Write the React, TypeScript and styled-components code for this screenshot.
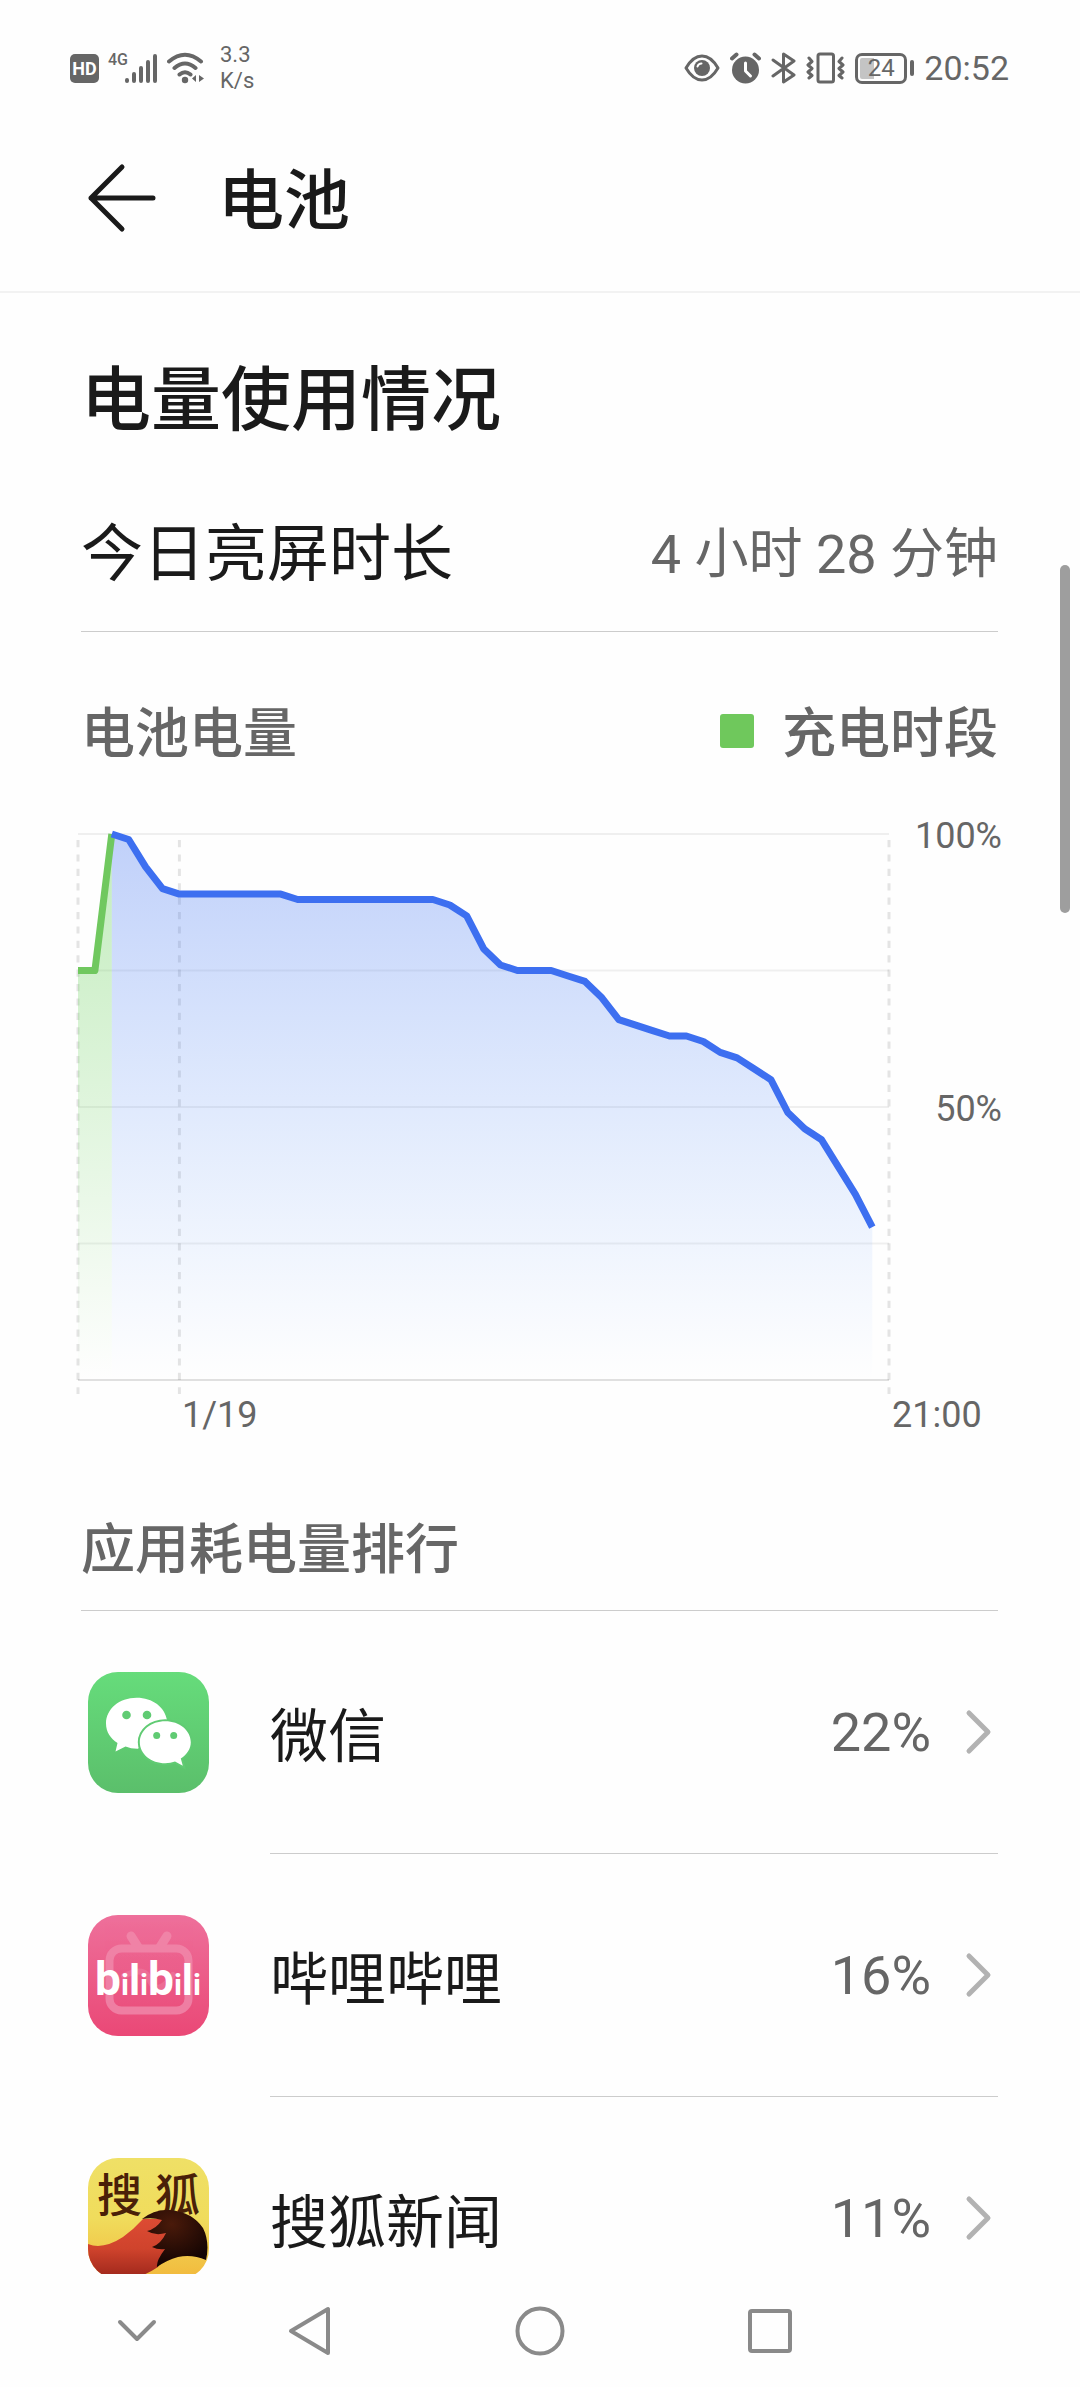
import React from 'react';
import styled, { createGlobalStyle } from 'styled-components';

const GlobalStyle = createGlobalStyle`
  * {
    box-sizing: border-box;
  }

  body {
    margin: 0;
    background: #fefefe;
    color: #1a1a1a;
    font-family: Roboto, "Noto Sans CJK SC", sans-serif;
  }

  button {
    margin: 0;
    padding: 0;
    border: none;
    background: none;
    color: inherit;
    font: inherit;
    text-align: left;
    cursor: pointer;
  }

  svg {
    display: block;
  }
`;

const Screen = styled.div`
  position: relative;
  display: flex;
  flex-direction: column;
  height: 100vh;
  overflow: hidden;
`;

/* ---------- status bar ---------- */

const StatusBar = styled.div`
  display: flex;
  align-items: center;
  justify-content: space-between;
  flex: none;
  height: 104px;
  padding: 32px 71px 0 70px;
  color: #666;
`;

const StatusGroup = styled.div<{ $gap: number }>`
  display: flex;
  align-items: center;
  gap: ${({ $gap }) => $gap}px;
`;

const HdBadge = styled.span`
  width: 29px;
  height: 29px;
  border-radius: 5px;
  background: #666;
  color: #fff;
  font-size: 18px;
  font-weight: 700;
  line-height: 29px;
  text-align: center;
`;

const Network = styled.span`
  display: flex;
  align-items: flex-start;
  font-size: 16px;
  font-weight: 500;
  line-height: 16px;

  svg {
    margin-left: -4px;
  }
`;

const NetSpeed = styled.span`
  margin-left: 6px;
  font-size: 22px;
  line-height: 26px;
`;

const BatteryBox = styled.span`
  display: flex;
  align-items: center;
  gap: 3px;

  &::after {
    content: '';
    width: 4px;
    height: 16px;
    border-radius: 2px;
    background: #666;
  }
`;

const BatteryLevel = styled.span`
  width: 52px;
  height: 31px;
  border: 3px solid #666;
  border-radius: 7px;
  background: linear-gradient(90deg, #c4c4c4 14px, transparent 14px) content-box;
  padding: 2px;
  font-size: 24px;
  line-height: 21px;
  text-align: center;
`;

const Clock = styled.span`
  font-size: 34px;
  line-height: 36px;
`;

/* ---------- page header ---------- */

const Header = styled.header`
  display: flex;
  align-items: center;
  flex: none;
  gap: 62px;
  height: 189px;
  padding: 0 87px;
  border-bottom: 2px solid #f2f2f2;
`;

const Title = styled.h1`
  margin: 0;
  padding-top: 8px;
  font-size: 66px;
  font-weight: 500;
  line-height: 80px;
`;

/* ---------- content ---------- */

const Content = styled.main`
  flex: 1;
  min-height: 0;
  padding: 68px 82px 0 81px;
  overflow: hidden;
`;

const SectionTitle = styled.h2`
  margin: 0 0 36px;
  font-size: 70px;
  font-weight: 500;
  line-height: 80px;
`;

const ScreenTime = styled.div`
  display: flex;
  align-items: center;
  justify-content: space-between;
  height: 155px;
  padding-bottom: 10px;
  border-bottom: 1px solid #ccc;
  font-size: 62px;
`;

const Value = styled.span`
  color: #666;
  font-size: 54px;
`;

const ChartHead = styled.div`
  display: flex;
  align-items: center;
  justify-content: space-between;
  margin: 71px 0 49px;
  color: #666;
  font-size: 54px;
  font-weight: 500;
  line-height: 64px;
`;

const Legend = styled.span`
  display: flex;
  align-items: center;
  gap: 28px;

  &::before {
    content: '';
    width: 34px;
    height: 34px;
    margin-bottom: 8px;
    border-radius: 3px;
    background: #6fc85c;
  }
`;

const ChartBox = styled.div`
  margin: 0 -4px;

  svg {
    width: 100%;
    height: auto;
    overflow: visible;
  }

  text {
    fill: #666;
    font-size: 36px;
  }
`;

const ListTitle = styled.h3`
  margin: 79px 0 0;
  padding-bottom: 27px;
  border-bottom: 1px solid #ccc;
  color: #666;
  font-size: 54px;
  font-weight: 500;
  line-height: 64px;
`;

const AppList = styled.ul`
  margin: 0;
  padding: 0;
  list-style: none;
`;

const AppRow = styled.button`
  display: flex;
  align-items: center;
  width: 100%;
  height: 243px;
  padding-left: 7px;
`;

const AppIcon = styled.span`
  flex: none;
  width: 121px;
  height: 121px;
  border-radius: 30px;
  overflow: hidden;
`;

const AppInfo = styled.span`
  display: flex;
  align-items: center;
  flex: 1;
  gap: 32px;
  height: 100%;
  margin-left: 61px;
  padding-right: 5px;
  border-bottom: 1px solid #ccc;
`;

const AppName = styled.span`
  flex: 1;
  font-size: 58px;
`;

const ScrollThumb = styled.div`
  position: absolute;
  top: 565px;
  right: 10px;
  width: 10px;
  height: 348px;
  border-radius: 5px;
  background: #9e9e9e;
`;

const NavBar = styled.nav`
  display: grid;
  flex: none;
  grid-template-columns: 78fr 117fr 230fr 230fr 230fr 195fr;
  height: 113px;
`;

const NavButton = styled.button`
  display: flex;
  align-items: center;
  justify-content: center;

  &:first-child {
    grid-column-start: 2;
  }
`;

/* ---------- status icons ---------- */

const SignalIcon = () => (
  <svg width="34" height="32" viewBox="0 0 34 32" fill="none" stroke="#666" strokeWidth="4" strokeLinecap="round">
    <path d="M3 28v1M10 22v7M17 16v13M24 10v19M31 4v25" />
  </svg>
);

const WifiIcon = () => (
  <svg width="38" height="32" viewBox="0 0 38 32" fill="none" stroke="#666" strokeWidth="4" strokeLinecap="round">
    <path d="M2 9.500Q18 -4 34 9.500M7.500 16Q18 7 28.500 16M12.500 22.500Q18 18 23.500 22.500" />
    <circle cx="18" cy="28" r="3.200" fill="#666" stroke="none" />
    <path d="M29 23v7l-4-3.500zM32 23v7l5-3.500z" fill="#666" stroke="none" />
  </svg>
);

const EyeIcon = () => (
  <svg width="36" height="32" viewBox="0 0 36 32">
    <path d="M2 16Q9 4 18 4T34 16Q27 28 18 28T2 16Z" fill="none" stroke="#666" strokeWidth="3" strokeLinejoin="round" />
    <circle cx="18" cy="16" r="8" fill="#666" />
    <path d="M13.500 14.500Q14.500 11.500 17.500 11.500" fill="none" stroke="#fff" strokeWidth="2" strokeLinecap="round" />
  </svg>
);

const AlarmIcon = () => (
  <svg width="31" height="32" viewBox="0 0 31 32">
    <circle cx="15.500" cy="18" r="13.500" fill="#666" />
    <path d="M15.500 11v8l5 5" fill="none" stroke="#fff" strokeWidth="3" strokeLinecap="round" strokeLinejoin="round" />
    <path d="M2 6.500L6.500 2.500M29 6.500L24.500 2.500" stroke="#666" strokeWidth="4" strokeLinecap="round" />
  </svg>
);

const BluetoothIcon = () => (
  <svg width="25" height="32" viewBox="0 0 25 32" fill="none" stroke="#666" strokeWidth="3" strokeLinecap="round" strokeLinejoin="round">
    <path d="M2 8L23 23L12.500 30V2L23 9L2 24" />
  </svg>
);

const VibrateIcon = () => (
  <svg width="39" height="32" viewBox="0 0 39 32" fill="none" stroke="#666" strokeWidth="3" strokeLinecap="round" strokeLinejoin="round">
    <rect x="12" y="2" width="15.500" height="28" rx="2" />
    <path d="M3 6l3 3.500-4 3.500 4 3.500-4 3.500 4 3.500-3 2.500M36 6l-3 3.500 4 3.500-4 3.500 4 3.500-4 3.500 3 2.500" />
  </svg>
);

const BackArrow = () => (
  <svg width="69" height="70" viewBox="0 0 69 70" fill="none" stroke="#1a1a1a" strokeWidth="5" strokeLinecap="round" strokeLinejoin="round">
    <path d="M66 35H4M35 4L4 35L35 66" />
  </svg>
);

const Chevron = () => (
  <svg width="30" height="46" viewBox="0 0 30 46" fill="none" stroke="#b2b2b2" strokeWidth="5" strokeLinecap="round" strokeLinejoin="round">
    <path d="M6 4L25 23L6 42" />
  </svg>
);

/* ---------- app logos ---------- */

const WechatLogo = () => (
  <svg width="121" height="121" viewBox="0 0 121 121">
    <defs>
      <linearGradient id="wechatBg" x1="0" y1="0" x2="0" y2="1">
        <stop offset="0" stopColor="#66dc7b" />
        <stop offset="1" stopColor="#5bbf6b" />
      </linearGradient>
    </defs>
    <rect width="121" height="121" fill="url(#wechatBg)" />
    <path d="M48.700 25.700C31 25.700 18 37 18 51.500C18 60 22.500 66.500 29.500 71L27.500 79.500L37.500 74.500Q43 76.800 50 76.700L79 48.500C77 35 64.500 25.700 48.700 25.700Z" fill="#fff" />
    <path d="M77.300 49.300C63 49.300 51.800 58.500 51.800 70.300S63 91.300 77.300 91.300Q82.500 91.300 87 89.600L94.800 93.800L92.800 86.500C99 82.500 102.800 77 102.800 70.300C102.800 58.500 91.500 49.300 77.300 49.300Z" fill="#fff" stroke="#60cb73" strokeWidth="4" paintOrder="stroke" />
    <g fill="#60cb73">
      <circle cx="38.500" cy="43" r="4.300" />
      <circle cx="59" cy="43" r="4.300" />
      <circle cx="68.700" cy="63.500" r="3.500" />
      <circle cx="85.700" cy="63.500" r="3.500" />
    </g>
  </svg>
);

const BilibiliLogo = () => (
  <svg width="121" height="121" viewBox="0 0 121 121">
    <defs>
      <linearGradient id="biliBg" x1="0" y1="0" x2="0" y2="1">
        <stop offset="0" stopColor="#ee709b" />
        <stop offset="1" stopColor="#ea4876" />
      </linearGradient>
    </defs>
    <rect width="121" height="121" fill="url(#biliBg)" />
    <g fill="none" stroke="#f08aac" strokeWidth="8" strokeLinecap="round" opacity="0.8">
      <path d="M43 21L50 32M79 21L72 32" strokeWidth="9" />
      <rect x="21.500" y="33.500" width="79" height="62" rx="12" />
      <path d="M36 61Q58 50 62 66Q70 82 85 60" strokeWidth="6" opacity="0.5" />
    </g>
    <text x="60" y="80" textAnchor="middle" fill="#fff" fontFamily="Roboto, sans-serif" fontSize="30" fontWeight="700">
      <tspan fontSize="46">b</tspan>i<tspan fontSize="42">l</tspan>i<tspan fontSize="46">b</tspan>i<tspan fontSize="42">l</tspan>i
    </text>
  </svg>
);

const SohuLogo = () => (
  <svg width="121" height="121" viewBox="0 0 121 121">
    <defs>
      <linearGradient id="sohuBg" x1="0" y1="0" x2="0" y2="1">
        <stop offset="0" stopColor="#efe066" />
        <stop offset="0.500" stopColor="#f0dc5c" />
        <stop offset="1" stopColor="#f2b93c" />
      </linearGradient>
      <linearGradient id="sohuTail" x1="0" y1="0" x2="0" y2="1">
        <stop offset="0" stopColor="#dd4b33" />
        <stop offset="0.500" stopColor="#cf432c" />
        <stop offset="1" stopColor="#9c261b" />
      </linearGradient>
      <radialGradient id="sohuTip" cx="0.450" cy="0.250" r="0.700">
        <stop offset="0" stopColor="#4a1a0a" />
        <stop offset="1" stopColor="#150503" />
      </radialGradient>
    </defs>
    <rect width="121" height="121" fill="url(#sohuBg)" />
    <g fill="#4a2008" fontFamily="Noto Sans CJK SC, sans-serif" fontSize="45" fontWeight="500">
      <text x="9" y="54">搜</text>
      <text x="67" y="54">狐</text>
    </g>
    <path d="M0 86Q15 92 35 79Q46 71 55 61L76 61L80 92L70 109Q58 117 44 121H0Z" fill="url(#sohuTail)" />
    <path d="M54 61Q66 51 82 52Q104 54 115 70Q122 84 118 102Q104 96 90 99Q79 102 69 109Q68 103 77 91Q70 92 64 89Q73 86 78 75Q67 78 59 73Q68 71 74 62Q64 59 54 61Z" fill="url(#sohuTip)" />
  </svg>
);

/* ---------- battery chart ---------- */

const STEP = 16.9;
const PLOT_TOP = 18;
const PLOT_BOTTOM = 564;
const PLOT_LEFT = 1;
const PLOT_RIGHT = 812;

// one sample per half hour, first two steps were on the charger
const charging = [75, 75, 100];
const draining = [
  100, 99, 94, 90, 89, 89, 89, 89, 89, 89, 89, 88, 88, 88, 88, 88,
  88, 88, 88, 88, 87, 85, 79, 76, 75, 75, 75, 74, 73, 70, 66, 65,
  64, 63, 63, 62, 60, 59, 57, 55, 49, 46, 44, 39, 34, 28,
];

const toX = (i: number) => PLOT_LEFT + i * STEP;
const toY = (level: number) => PLOT_BOTTOM - (level / 100) * (PLOT_BOTTOM - PLOT_TOP);

const linePath = (levels: number[], start: number) =>
  'M' + levels.map((level, i) => `${toX(start + i).toFixed(1)} ${toY(level).toFixed(1)}`).join('L');

const areaPath = (levels: number[], start: number) =>
  `${linePath(levels, start)}V${PLOT_BOTTOM}H${toX(start)}Z`;

const BatteryChart = () => (
  <ChartBox>
    <svg viewBox="0 0 925 624" role="img" aria-label="电池电量">
      <defs>
        <linearGradient id="drainFill" gradientUnits="userSpaceOnUse" x1="0" y1={PLOT_TOP} x2="0" y2={PLOT_BOTTOM}>
          <stop offset="0" stopColor="#3d6ff0" stopOpacity="0.320" />
          <stop offset="1" stopColor="#4a90ff" stopOpacity="0" />
        </linearGradient>
        <linearGradient id="chargeFill" gradientUnits="userSpaceOnUse" x1="0" y1={PLOT_TOP} x2="0" y2={PLOT_BOTTOM}>
          <stop offset="0" stopColor="#5fce50" stopOpacity="0.380" />
          <stop offset="1" stopColor="#5fce50" stopOpacity="0" />
        </linearGradient>
      </defs>

      {[100, 75, 50, 25, 0].map((level) => (
        <path key={level} d={`M${PLOT_LEFT} ${toY(level)}H${PLOT_RIGHT}`} stroke={level === 0 ? '#e0e0e0' : '#efefef'} strokeWidth="2" />
      ))}
      {[toX(0), toX(6), PLOT_RIGHT].map((x) => (
        <path key={x} d={`M${x} 24V578`} stroke="#000" strokeOpacity="0.100" strokeWidth="3" strokeDasharray="7.200 7.200" />
      ))}

      <path d={areaPath(charging, 0)} fill="url(#chargeFill)" />
      <path d={areaPath(draining, 2)} fill="url(#drainFill)" />
      <g fill="none" strokeWidth="7" strokeLinejoin="round">
        <path d={linePath(charging, 0)} stroke="#70c85f" />
        <path d={linePath(draining, 2)} stroke="#3d6ff0" />
      </g>

      <text x="925" y="32" textAnchor="end">100%</text>
      <text x="925" y="305" textAnchor="end">50%</text>
      <text x="105" y="611">1/19</text>
      <text x="815" y="611">21:00</text>
    </svg>
  </ChartBox>
);

const apps = [
  { name: '微信', percent: 22, logo: <WechatLogo /> },
  { name: '哔哩哔哩', percent: 16, logo: <BilibiliLogo /> },
  { name: '搜狐新闻', percent: 11, logo: <SohuLogo /> },
];

function App() {
  return (
    <Screen>
      <GlobalStyle />
      <StatusBar>
        <StatusGroup $gap={9}>
          <HdBadge>HD</HdBadge>
          <Network>4G<SignalIcon /></Network>
          <WifiIcon />
          <NetSpeed>3.3<br />K/s</NetSpeed>
        </StatusGroup>
        <StatusGroup $gap={10}>
          <EyeIcon />
          <AlarmIcon />
          <BluetoothIcon />
          <VibrateIcon />
          <BatteryBox><BatteryLevel>24</BatteryLevel></BatteryBox>
          <Clock>20:52</Clock>
        </StatusGroup>
      </StatusBar>

      <Header>
        <button aria-label="返回"><BackArrow /></button>
        <Title>电池</Title>
      </Header>

      <Content>
        <SectionTitle>电量使用情况</SectionTitle>
        <ScreenTime>
          <span>今日亮屏时长</span>
          <Value>4 小时 28 分钟</Value>
        </ScreenTime>

        <ChartHead>
          <span>电池电量</span>
          <Legend>充电时段</Legend>
        </ChartHead>
        <BatteryChart />

        <ListTitle>应用耗电量排行</ListTitle>
        <AppList>
          {apps.map((app) => (
            <li key={app.name}>
              <AppRow>
                <AppIcon>{app.logo}</AppIcon>
                <AppInfo>
                  <AppName>{app.name}</AppName>
                  <Value>{app.percent}%</Value>
                  <Chevron />
                </AppInfo>
              </AppRow>
            </li>
          ))}
        </AppList>
      </Content>

      <ScrollThumb />

      <NavBar>
        <NavButton aria-label="收起">
          <svg width="40" height="24" viewBox="0 0 40 24" fill="none" stroke="#8a8a8a" strokeWidth="4" strokeLinecap="round" strokeLinejoin="round">
            <path d="M3 3L20 20L37 3" />
          </svg>
        </NavButton>
        <NavButton aria-label="返回">
          <svg width="44" height="50" viewBox="0 0 44 50" fill="none" stroke="#8a8a8a" strokeWidth="4" strokeLinejoin="round">
            <path d="M40 3V47L3 25Z" />
          </svg>
        </NavButton>
        <NavButton aria-label="主页">
          <svg width="50" height="50" viewBox="0 0 50 50" fill="none" stroke="#8a8a8a" strokeWidth="4">
            <circle cx="25" cy="25" r="22.500" />
          </svg>
        </NavButton>
        <NavButton aria-label="最近任务">
          <svg width="46" height="46" viewBox="0 0 46 46" fill="none" stroke="#8a8a8a" strokeWidth="4">
            <rect x="3" y="3" width="40" height="40" rx="2" />
          </svg>
        </NavButton>
      </NavBar>
    </Screen>
  );
}

export default App;
